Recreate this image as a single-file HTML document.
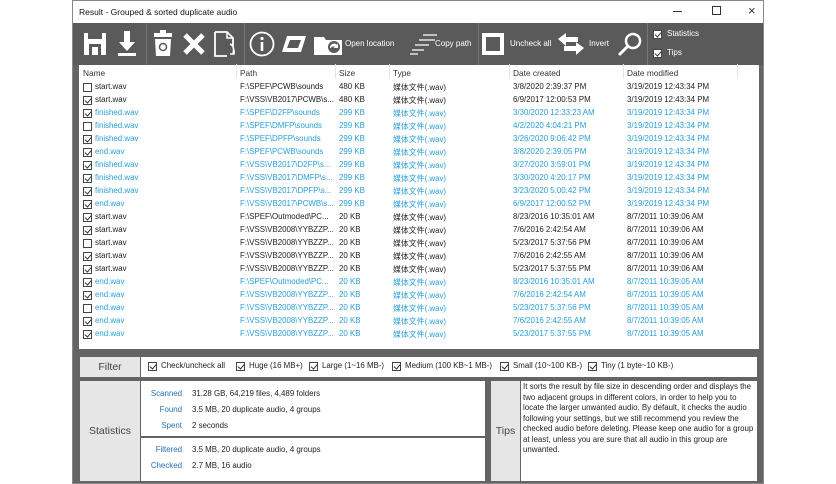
<!DOCTYPE html>
<html><head><meta charset="utf-8"><style>
*{margin:0;padding:0;box-sizing:border-box}
body{width:836px;height:484px;background:#fff;position:relative;overflow:hidden;font-family:"Liberation Sans","Noto Sans CJK SC",sans-serif;font-size:7.9px;color:#222}
.a{position:absolute;white-space:nowrap}
#win{position:absolute;left:72px;top:0;width:692px;height:484px;background:#646464;border:1px solid #888}
#title{position:absolute;left:0;top:0;width:690px;height:22px;background:#fff}
#tb{position:absolute;left:0;top:22px;width:690px;height:42px;background:#5a5a5a}
.sep{position:absolute;top:0;width:1px;height:42px;background:#777}
.tl{color:#fff;font-size:8px}
#tab{position:absolute;left:6px;top:64px;width:680px;height:284px;background:#fff}
.hd{color:#333;font-size:8.3px}
.cb{position:absolute;width:9px;height:9px;border:1px solid #444;background:#fff}
.cb.c::after{content:"";position:absolute;left:1.5px;top:0px;width:3px;height:5px;border-right:1px solid #333;border-bottom:1px solid #333;transform:rotate(40deg)}
.b{color:#2a9fd8}
.lab{position:absolute;background:#e6e6e6;color:#444;font-size:10.5px;display:flex;align-items:center;justify-content:center}
.wb{position:absolute;background:#fff}
.sl{color:#2a6fb5;text-align:right;width:60px}
</style></head><body>
<div id="win">
<div id="title"><div class="a" style="left:6px;top:6px;font-size:8.5px;color:#111">Result - Grouped &amp; sorted duplicate audio</div>
<div class="a" style="left:600px;top:10px;width:9px;height:1px;background:#333"></div>
<div class="a" style="left:639px;top:5px;width:9px;height:9px;border:1px solid #333"></div>
<div class="a" style="left:675px;top:2px;font-size:13px;color:#333">×</div>
</div>
<div id="tb">
<svg class="a" style="left:10px;top:8px" width="24" height="26" viewBox="0 0 24 26"><path d="M1 2h22v22H1z" fill="#fff"/><rect x="6" y="13" width="12" height="11" fill="#5a5a5a"/><rect x="9" y="16" width="6" height="8" fill="#fff"/><rect x="5" y="2" width="14" height="6" fill="#5a5a5a"/></svg>
<svg class="a" style="left:44px;top:7px" width="20" height="28" viewBox="0 0 20 28"><path d="M7 1h6v11h5l-8 9-8-9h5z" fill="#fff"/><rect x="1" y="23" width="18" height="3" fill="#fff"/></svg>
<div class="sep" style="left:73px"></div>
<svg class="a" style="left:80px;top:6px" width="20" height="28" viewBox="0 0 20 28"><rect x="7" y="1" width="6" height="3" fill="#fff"/><rect x="1" y="4" width="18" height="4" fill="#fff"/><path d="M2 10h16l-1 17H3z" fill="#fff"/><circle cx="10" cy="18" r="3.5" fill="none" stroke="#5a5a5a" stroke-width="1.5"/></svg>
<svg class="a" style="left:109px;top:9px" width="24" height="24" viewBox="0 0 24 24"><path d="M3 3L21 21M21 3L3 21" stroke="#fff" stroke-width="5"/></svg>
<svg class="a" style="left:140px;top:7px" width="26" height="28" viewBox="0 0 26 28"><path d="M2 2h12l6 6v8M2 2v24h12" fill="none" stroke="#fff" stroke-width="1.8"/><path d="M14 2v6h6" fill="none" stroke="#fff" stroke-width="1.5"/><path d="M17 14q5 2 3 10M17 24h4v-4" fill="none" stroke="#fff" stroke-width="1.6"/></svg>
<div class="sep" style="left:171px"></div>
<svg class="a" style="left:176px;top:8px" width="26" height="26" viewBox="0 0 26 26"><circle cx="13" cy="13" r="11.5" fill="none" stroke="#fff" stroke-width="1.8"/><circle cx="13" cy="7.5" r="1.6" fill="#fff"/><rect x="11.7" y="11" width="2.6" height="9" fill="#fff"/></svg>
<svg class="a" style="left:208px;top:12px" width="26" height="18" viewBox="0 0 26 18"><path d="M6 1h19l-5 16H1z" fill="#fff"/><path d="M9 5h11l-3 8H6z" fill="#5a5a5a"/></svg>
<svg class="a" style="left:240px;top:9px" width="30" height="24" viewBox="0 0 30 24"><path d="M1 5h10l2 3h16v15H1z" fill="#fff"/><circle cx="21" cy="15" r="6" fill="#5a5a5a"/><path d="M17 16a4 4 0 0 1 7-3l1-2v5h-5l2-1a2.5 2.5 0 0 0-4 1z" fill="#fff"/></svg>
<div class="a tl" style="left:272px;top:16px">Open location</div>
<svg class="a" style="left:336px;top:9px" width="30" height="24" viewBox="0 0 30 24"><path d="M14 3h14M10 8h16M6 13h14M3 18h12M1 22h8" stroke="#fff" stroke-width="1.3"/></svg>
<div class="a tl" style="left:362px;top:16px">Copy path</div>
<div class="sep" style="left:405px"></div>
<div class="a" style="left:409px;top:10px;width:22px;height:22px;border:4px solid #fff;background:#5a5a5a"></div>
<div class="a tl" style="left:437px;top:16px">Uncheck all</div>
<svg class="a" style="left:484px;top:9px" width="28" height="24" viewBox="0 0 28 24"><path d="M1 7l8-6v4h12v5H9v4z" fill="#fff"/><path d="M27 16l-8-6v4H7v5h12v4z" fill="#fff"/></svg>
<div class="a tl" style="left:516px;top:16px">Invert</div>
<svg class="a" style="left:544px;top:8px" width="26" height="26" viewBox="0 0 26 26"><circle cx="16" cy="10" r="7" fill="none" stroke="#fff" stroke-width="2.5"/><path d="M11 15L2 24" stroke="#fff" stroke-width="3"/></svg>
<div class="sep" style="left:574px"></div>
<div class="cb c" style="left:580px;top:7px"></div><div class="a tl" style="left:594px;top:6px">Statistics</div>
<div class="cb c" style="left:580px;top:26px"></div><div class="a tl" style="left:594px;top:25px">Tips</div>
</div>
<div id="tab"></div>
</div>
<div id="rows"></div>
<div class="a hd" style="left:83px;top:68px">Name</div>
<div class="a hd" style="left:240px;top:68px">Path</div>
<div class="a hd" style="left:339px;top:68px">Size</div>
<div class="a hd" style="left:393px;top:68px">Type</div>
<div class="a hd" style="left:513px;top:68px">Date created</div>
<div class="a hd" style="left:627px;top:68px">Date modified</div>
<div class="a" style="left:236px;top:64px;width:1px;height:14px;background:#e4e4e4"></div>
<div class="a" style="left:335px;top:64px;width:1px;height:14px;background:#e4e4e4"></div>
<div class="a" style="left:389px;top:64px;width:1px;height:14px;background:#e4e4e4"></div>
<div class="a" style="left:509px;top:64px;width:1px;height:14px;background:#e4e4e4"></div>
<div class="a" style="left:623px;top:64px;width:1px;height:14px;background:#e4e4e4"></div>
<div class="a" style="left:737px;top:64px;width:1px;height:14px;background:#e4e4e4"></div>

<div class="lab" style="left:80px;top:357px;width:60px;height:20px">Filter</div>
<div class="wb" style="left:141px;top:357px;width:616px;height:20px"></div>
<div class="cb c" style="left:148px;top:362px"></div><div class="a" style="left:161px;top:361px">Check/uncheck all</div>
<div class="cb c" style="left:236px;top:362px"></div><div class="a" style="left:249px;top:361px">Huge (16 MB+)</div>
<div class="cb c" style="left:309px;top:362px"></div><div class="a" style="left:322px;top:361px">Large (1~16 MB-)</div>
<div class="cb c" style="left:392px;top:362px"></div><div class="a" style="left:405px;top:361px">Medium (100 KB~1 MB-)</div>
<div class="cb c" style="left:500px;top:362px"></div><div class="a" style="left:513px;top:361px">Small (10~100 KB-)</div>
<div class="cb c" style="left:588px;top:362px"></div><div class="a" style="left:601px;top:361px">Tiny (1 byte~10 KB-)</div>

<div class="lab" style="left:80px;top:381px;width:60px;height:100px">Statistics</div>
<div class="wb" style="left:141px;top:381px;width:344px;height:55px"></div>
<div class="wb" style="left:141px;top:438px;width:344px;height:43px"></div>
<div class="a sl" style="left:122px;top:389px">Scanned</div><div class="a" style="left:192px;top:389px">31.28 GB, 64,219 files, 4,489 folders</div>
<div class="a sl" style="left:122px;top:405px">Found</div><div class="a" style="left:192px;top:405px">3.5 MB, 20 duplicate audio, 4 groups</div>
<div class="a sl" style="left:122px;top:421px">Spent</div><div class="a" style="left:192px;top:421px">2 seconds</div>
<div class="a sl" style="left:122px;top:445px">Filtered</div><div class="a" style="left:192px;top:445px">3.5 MB, 20 duplicate audio, 4 groups</div>
<div class="a sl" style="left:122px;top:461px">Checked</div><div class="a" style="left:192px;top:461px">2.7 MB, 16 audio</div>
<div class="lab" style="left:491px;top:381px;width:29px;height:100px">Tips</div>
<div class="wb" style="left:521px;top:381px;width:236px;height:100px"></div>
<div class="a" style="left:523px;top:382px;width:234px;white-space:normal;line-height:10.5px;font-size:7.9px">It sorts the result by file size in descending order and displays the two adjacent groups in different colors, in order to help you to locate the larger unwanted audio. By default, it checks the audio following your settings, but we still recommend you review the checked audio before deleting. Please keep one audio for a group at least, unless you are sure that all audio in this group are unwanted.</div>

<script>
var d=[
[0,0,"start.wav","F:\\SPEF\\PCWB\\sounds","480 KB","3/8/2020 2:39:37 PM","3/19/2019 12:43:34 PM"],
[1,0,"start.wav","F:\\VSS\\VB2017\\PCWB\\s...","480 KB","6/9/2017 12:00:53 PM","3/19/2019 12:43:34 PM"],
[1,1,"finished.wav","F:\\SPEF\\D2FP\\sounds","299 KB","3/30/2020 12:33:23 AM","3/19/2019 12:43:34 PM"],
[0,1,"finished.wav","F:\\SPEF\\DMFP\\sounds","299 KB","4/2/2020 4:04:21 PM","3/19/2019 12:43:34 PM"],
[1,1,"finished.wav","F:\\SPEF\\DPFP\\sounds","299 KB","3/26/2020 9:06:42 PM","3/19/2019 12:43:34 PM"],
[1,1,"end.wav","F:\\SPEF\\PCWB\\sounds","299 KB","3/8/2020 2:39:05 PM","3/19/2019 12:43:34 PM"],
[1,1,"finished.wav","F:\\VSS\\VB2017\\D2FP\\s...","299 KB","3/27/2020 3:59:01 PM","3/19/2019 12:43:34 PM"],
[1,1,"finished.wav","F:\\VSS\\VB2017\\DMFP\\s...","299 KB","3/30/2020 4:20:17 PM","3/19/2019 12:43:34 PM"],
[1,1,"finished.wav","F:\\VSS\\VB2017\\DPFP\\s...","299 KB","3/23/2020 5:00:42 PM","3/19/2019 12:43:34 PM"],
[1,1,"end.wav","F:\\VSS\\VB2017\\PCWB\\s...","299 KB","6/9/2017 12:00:52 PM","3/19/2019 12:43:34 PM"],
[1,0,"start.wav","F:\\SPEF\\Outmoded\\PC...","20 KB","8/23/2016 10:35:01 AM","8/7/2011 10:39:06 AM"],
[1,0,"start.wav","F:\\VSS\\VB2008\\YYBZZP...","20 KB","7/6/2016 2:42:54 AM","8/7/2011 10:39:06 AM"],
[0,0,"start.wav","F:\\VSS\\VB2008\\YYBZZP...","20 KB","5/23/2017 5:37:56 PM","8/7/2011 10:39:06 AM"],
[1,0,"start.wav","F:\\VSS\\VB2008\\YYBZZP...","20 KB","7/6/2016 2:42:55 AM","8/7/2011 10:39:06 AM"],
[1,0,"start.wav","F:\\VSS\\VB2008\\YYBZZP...","20 KB","5/23/2017 5:37:55 PM","8/7/2011 10:39:06 AM"],
[1,1,"end.wav","F:\\SPEF\\Outmoded\\PC...","20 KB","8/23/2016 10:35:01 AM","8/7/2011 10:39:05 AM"],
[1,1,"end.wav","F:\\VSS\\VB2008\\YYBZZP...","20 KB","7/6/2016 2:42:54 AM","8/7/2011 10:39:05 AM"],
[0,1,"end.wav","F:\\VSS\\VB2008\\YYBZZP...","20 KB","5/23/2017 5:37:56 PM","8/7/2011 10:39:05 AM"],
[1,1,"end.wav","F:\\VSS\\VB2008\\YYBZZP...","20 KB","7/6/2016 2:42:55 AM","8/7/2011 10:39:05 AM"],
[1,1,"end.wav","F:\\VSS\\VB2008\\YYBZZP...","20 KB","5/23/2017 5:37:55 PM","8/7/2011 10:39:05 AM"]];
var h="";
d.forEach(function(r,i){var y=82+i*13,c=r[1]?' b':'';
h+='<div class="cb'+(r[0]?' c':'')+'" style="left:83px;top:'+(y+1)+'px"></div>';
h+='<div class="a'+c+'" style="left:95px;top:'+y+'px">'+r[2]+'</div>';
h+='<div class="a'+c+'" style="left:240px;top:'+y+'px">'+r[3]+'</div>';
h+='<div class="a'+c+'" style="left:339px;top:'+y+'px">'+r[4]+'</div>';
h+='<div class="a'+c+'" style="left:393px;top:'+y+'px">媒体文件(.wav)</div>';
h+='<div class="a'+c+'" style="left:513px;top:'+y+'px">'+r[5]+'</div>';
h+='<div class="a'+c+'" style="left:627px;top:'+y+'px">'+r[6]+'</div>';});
document.getElementById("rows").innerHTML=h;
</script>
</body></html>
